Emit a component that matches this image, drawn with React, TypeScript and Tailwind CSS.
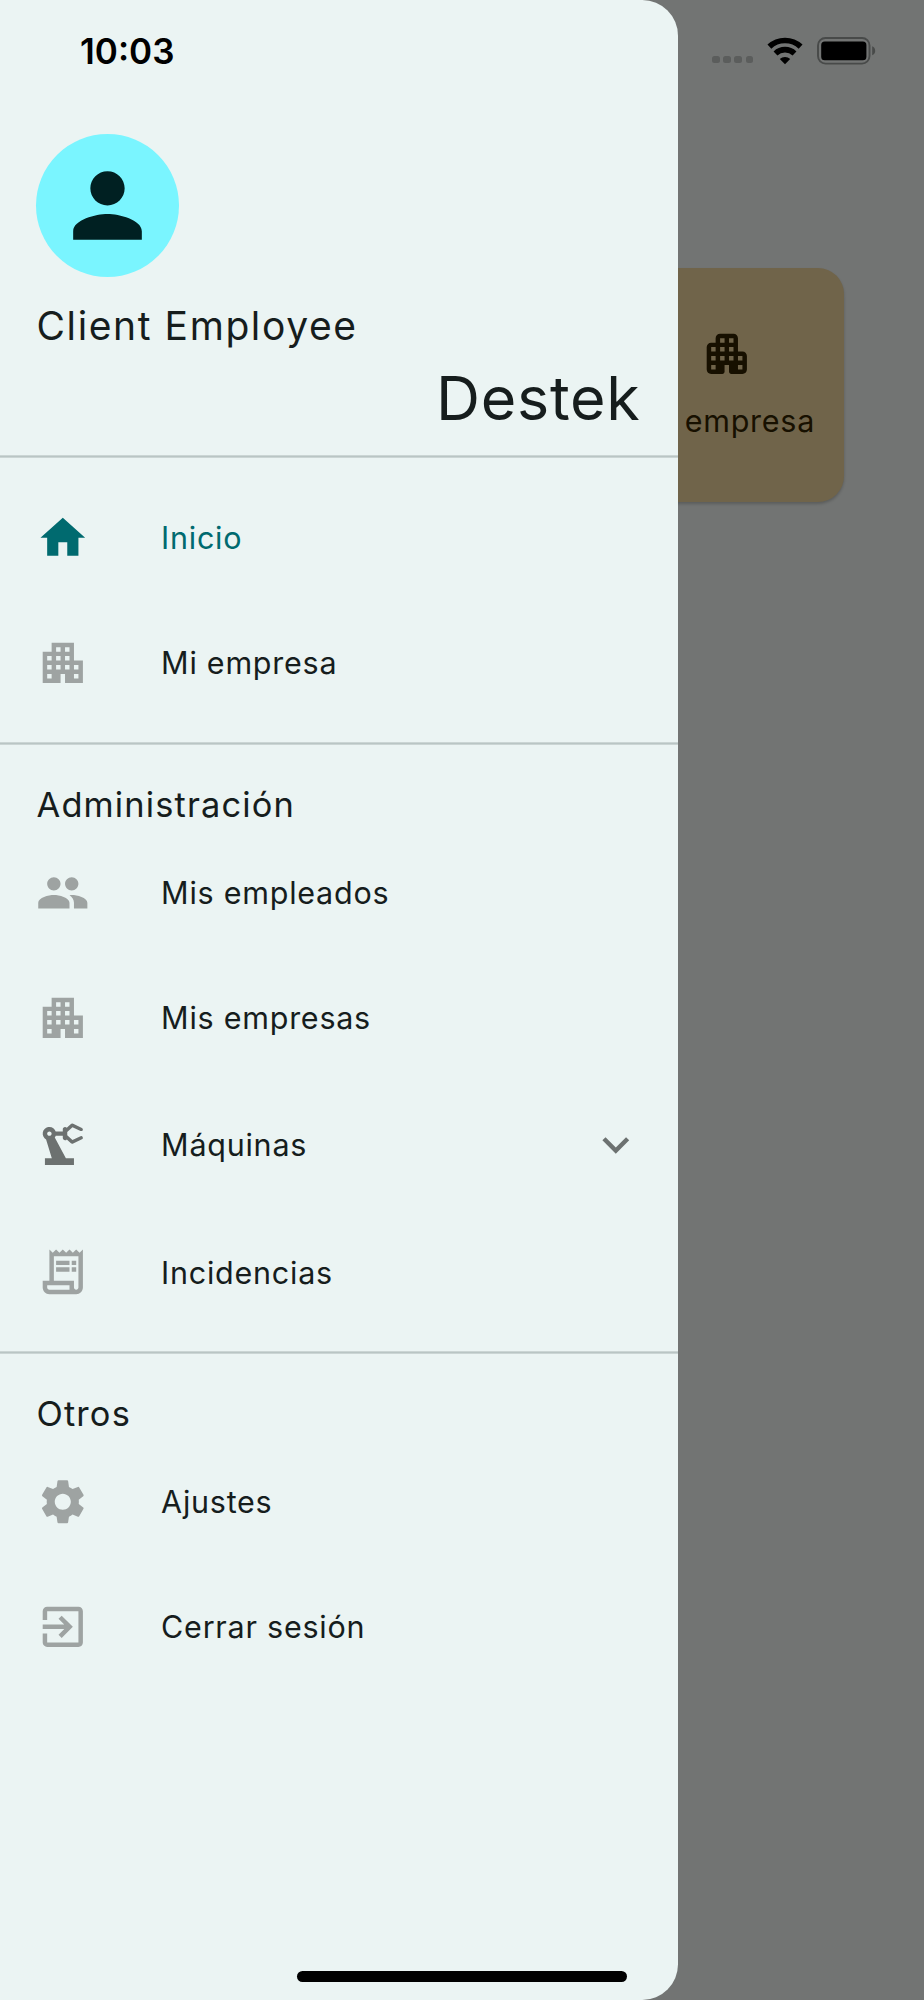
import React from "react";
import type { IconType } from "react-icons";
import {
  MdApartment,
  MdExitToApp,
  MdExpandMore,
  MdHome,
  MdOutlineReceiptLong,
  MdPeople,
  MdPerson,
  MdPrecisionManufacturing,
  MdSettings,
} from "react-icons/md";

interface DrawerItemProps {
  icon: IconType;
  label: string;
  selected?: boolean;
  expandable?: boolean;
}

function DrawerItem({ icon: Icon, label, selected, expandable }: DrawerItemProps) {
  const iconColor = selected
    ? "text-[#006a6f]"
    : expandable
      ? "text-[#6c7170]"
      : "text-[#9ea3a2]";

  return (
    <li
      className={`flex items-center px-[35.5px] ${expandable ? "h-[129.5px]" : "h-[125px]"}`}
    >
      <Icon className={`size-[53.6px] shrink-0 ${iconColor}`} />
      <span
        className={`ml-[72px] flex-1 pt-px text-[30.5px] tracking-[0.75px] whitespace-nowrap ${
          selected ? "text-[#006a6f]" : "text-[#161d1d]"
        }`}
      >
        {label}
      </span>
      {expandable && <MdExpandMore className="size-[53.6px] text-[#6c7170]" />}
    </li>
  );
}

function Divider() {
  return (
    <div className="flex h-[35.7px] items-center">
      <div className="h-[3px] w-full border-y border-[#cbd5d4] bg-[#b9c5c4]" />
    </div>
  );
}

function SectionTitle({ children }: { children: React.ReactNode }) {
  return (
    <h2 className="flex h-[69px] items-center px-[36.5px] pt-[18px] text-[34.4px] tracking-[1.15px] text-[#161d1d]">
      {children}
    </h2>
  );
}

function ApartmentRounded({ className }: { className?: string }) {
  return (
    <svg viewBox="0 0 24 24" fill="currentColor" className={className}>
      <path d="M17 11V5c0-1.1-.9-2-2-2H9c-1.1 0-2 .9-2 2v2H5c-1.1 0-2 .9-2 2v10c0 1.1.9 2 2 2h5c.55 0 1-.45 1-1v-3h2v3c0 .55.45 1 1 1h5c1.1 0 2-.9 2-2v-6c0-1.1-.9-2-2-2h-2zM7 19H5v-2h2v2zm0-4H5v-2h2v2zm0-4H5V9h2v2zm4 4H9v-2h2v2zm0-4H9V9h2v2zm0-4H9V5h2v2zm4 8h-2v-2h2v2zm0-4h-2V9h2v2zm0-4h-2V5h2v2zm4 12h-2v-2h2v2zm0-4h-2v-2h2v2z" />
    </svg>
  );
}

function StatusBar() {
  return (
    <div className="absolute inset-x-0 top-0 z-20 flex h-[102px] items-center justify-between pr-[47px] pl-[80px] text-black">
      <span className="text-[35px] font-semibold">10:03</span>
      <div className="flex items-center">
        <div className="mt-[17px] flex gap-[3.6px]">
          {[0, 1, 2, 3].map((dot) => (
            <span key={dot} className="size-[7.5px] rounded-[2.5px] bg-[#5b5d5c]" />
          ))}
        </div>
        <svg viewBox="0 0 36 28" className="ml-[14px] h-[28px] w-[36px]">
          <g fill="none" stroke="currentColor" strokeWidth="5.6">
            <path d="M2.4 9.6C11 1.4 25 1.4 33.6 9.6" />
            <path d="M8.5 16.4C13.7 11.4 22.3 11.4 27.5 16.4" />
          </g>
          <path d="M18 27.3 L12.8 22 C15.6 19.2 20.4 19.2 23.2 22 Z" fill="currentColor" />
        </svg>
        <svg viewBox="0 0 60 28" className="ml-[14px] h-[28px] w-[60px]">
          <rect x="1" y="1" width="51.5" height="25.6" rx="7.5" fill="none" stroke="#484a49" strokeWidth="1.9" />
          <rect x="4.2" y="4.5" width="45.2" height="18.8" rx="3.5" />
          <path d="M55.2 9.3c4 1.6 4 7.5 0 9z" fill="#484a49" />
        </svg>
      </div>
    </div>
  );
}

export default function App() {
  return (
    <div className="relative h-[2000px] w-[924px] overflow-hidden bg-[#727473] font-['Inter',sans-serif]">
      <StatusBar />

      {/* home screen behind the scrim */}
      <main className="flex justify-end pt-[268px] pr-[80px]">
        <div className="flex h-[234px] w-[234px] flex-col items-center rounded-[26px] bg-[#70644a] pt-[58.5px] text-[#171000] shadow-[0_2px_3px_rgba(0,0,0,0.2)]">
          <ApartmentRounded className="size-[53.6px]" />
          <span className="mt-[19px] text-[30.5px] leading-[44px] tracking-[0.75px] whitespace-nowrap">
            Mi empresa
          </span>
        </div>
      </main>

      <nav className="absolute inset-y-0 left-0 z-10 flex w-[678px] flex-col rounded-r-[35.7px] bg-[#ebf4f3]">
        <header className="flex h-[438.6px] flex-col pt-[134px] text-[#161d1d]">
          <div className="ml-[35.7px] flex size-[143px] items-center justify-center rounded-full bg-[#7af5ff]">
            <MdPerson className="size-[103px] text-[#002022]" />
          </div>
          <p className="mt-[24px] pl-[36.5px] text-[39px] leading-[50px] tracking-[1.6px]">
            Client Employee
          </p>
          <h1 className="mt-[10px] pr-[37.5px] text-right text-[61px] leading-[74px] tracking-[0.7px]">
            Destek
          </h1>
        </header>

        <Divider />
        <ul className="pt-px">
          <DrawerItem icon={MdHome} label="Inicio" selected />
          <DrawerItem icon={MdApartment} label="Mi empresa" />
        </ul>

        <Divider />
        <SectionTitle>Administración</SectionTitle>
        <ul>
          <DrawerItem icon={MdPeople} label="Mis empleados" />
          <DrawerItem icon={MdApartment} label="Mis empresas" />
          <DrawerItem icon={MdPrecisionManufacturing} label="Máquinas" expandable />
          <DrawerItem icon={MdOutlineReceiptLong} label="Incidencias" />
        </ul>

        <Divider />
        <SectionTitle>Otros</SectionTitle>
        <ul>
          <DrawerItem icon={MdSettings} label="Ajustes" />
          <DrawerItem icon={MdExitToApp} label="Cerrar sesión" />
        </ul>
      </nav>

      <div className="absolute bottom-[18px] left-1/2 z-20 h-[11px] w-[330px] -translate-x-1/2 rounded-full bg-black" />
    </div>
  );
}
